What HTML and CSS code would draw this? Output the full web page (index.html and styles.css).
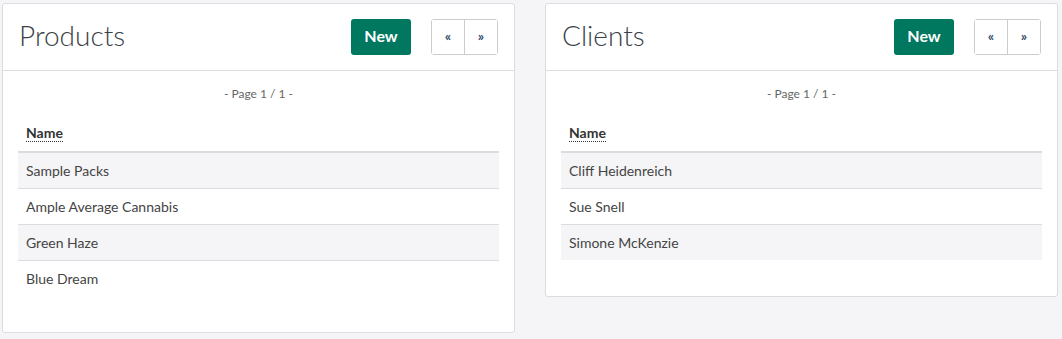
FILE: index.html
```html
<!DOCTYPE html>
<html lang="en">
<head>
    <meta charset="UTF-8">
    <meta name="viewport" content="width=device-width, initial-scale=1.0">
    <title>Dashboard</title>
    <link rel="stylesheet" href="styles.css">
</head>
<body>
    <div class="dashboard">
        <!-- Products -->
        <div class="panel">
            <div class="panel-head">
                <h2>Products</h2>
                <button class="btn-new">New</button>
                <div class="pager">
                    <button>&laquo;</button>
                    <button>&raquo;</button>
                </div>
            </div>
            <div class="panel-body">
                <p class="page-info">- Page 1 / 1 -</p>
                <table class="list">
                    <thead>
                        <tr><th><span class="sort">Name</span></th></tr>
                    </thead>
                    <tbody>
                        <tr><td>Sample Packs</td></tr>
                        <tr><td>Ample Average Cannabis</td></tr>
                        <tr><td>Green Haze</td></tr>
                        <tr><td>Blue Dream</td></tr>
                    </tbody>
                </table>
            </div>
        </div>

        <!-- Clients -->
        <div class="panel">
            <div class="panel-head">
                <h2>Clients</h2>
                <button class="btn-new">New</button>
                <div class="pager">
                    <button>&laquo;</button>
                    <button>&raquo;</button>
                </div>
            </div>
            <div class="panel-body">
                <p class="page-info">- Page 1 / 1 -</p>
                <table class="list">
                    <thead>
                        <tr><th><span class="sort">Name</span></th></tr>
                    </thead>
                    <tbody>
                        <tr><td>Cliff Heidenreich</td></tr>
                        <tr><td>Sue Snell</td></tr>
                        <tr><td>Simone McKenzie</td></tr>
                    </tbody>
                </table>
            </div>
        </div>
    </div>
</body>
</html>
```

FILE: styles.css
```css
body {
    font-family: Lato, "Open Sans", sans-serif;
    background: #f5f5f7;
    color: #444;
    margin: 0;
    padding: 3px 4px 0 2px;
}

.dashboard {
    display: grid;
    grid-template-columns: 1fr 1fr;
    gap: 30px;
    align-items: start;
}

.panel {
    background: #fff;
    border: 1px solid #dcdcdf;
    border-radius: 3px;
}

.panel-head {
    display: flex;
    align-items: flex-start;
    padding: 15px 16px 15px 16px;
    border-bottom: 1px solid #dcdcdf;
}

.panel-head h2 {
    flex: 1;
    margin: 0;
    font-size: 28px;
    font-weight: 300;
    color: #3a3f48;
    line-height: 32px;
}

.btn-new {
    width: 60px;
    height: 36px;
    margin-right: 20px;
    padding: 0 0 3px 0;
    border: none;
    border-radius: 3px;
    background: #00775f;
    color: #fff;
    font-family: inherit;
    font-size: 16px;
    font-weight: 700;
    cursor: pointer;
}

.pager {
    display: flex;
    border: 1px solid #ccc;
    border-radius: 3px;
}

.pager button {
    width: 32px;
    height: 34px;
    padding: 0 0 3px 0;
    border: none;
    background: #fff;
    color: #2e4a6b;
    font-family: inherit;
    font-size: 14px;
    font-weight: 700;
    cursor: pointer;
}

.pager button + button {
    border-left: 1px solid #ccc;
    width: 33px;
}

.panel-body {
    padding: 14px 15px 36px 15px;
}

.page-info {
    margin: 0 0 13px 0;
    text-align: center;
    font-size: 12px;
    line-height: 17px;
    color: #666;
}

.list {
    width: 100%;
    border-collapse: collapse;
    font-size: 14px;
}

.list th {
    text-align: left;
    padding: 8px 8px 9px 8px;
    line-height: 19px;
    border-bottom: 2px solid #dcdcdf;
    color: #333;
}

.sort {
    border-bottom: 1px dotted #333;
}

.list td {
    padding: 8px;
    line-height: 19px;
    border-top: 1px solid #dcdcdf;
}

.list tbody tr:first-child td {
    border-top: none;
}

.list tbody tr:nth-child(odd) {
    background: #f5f5f7;
}
```
